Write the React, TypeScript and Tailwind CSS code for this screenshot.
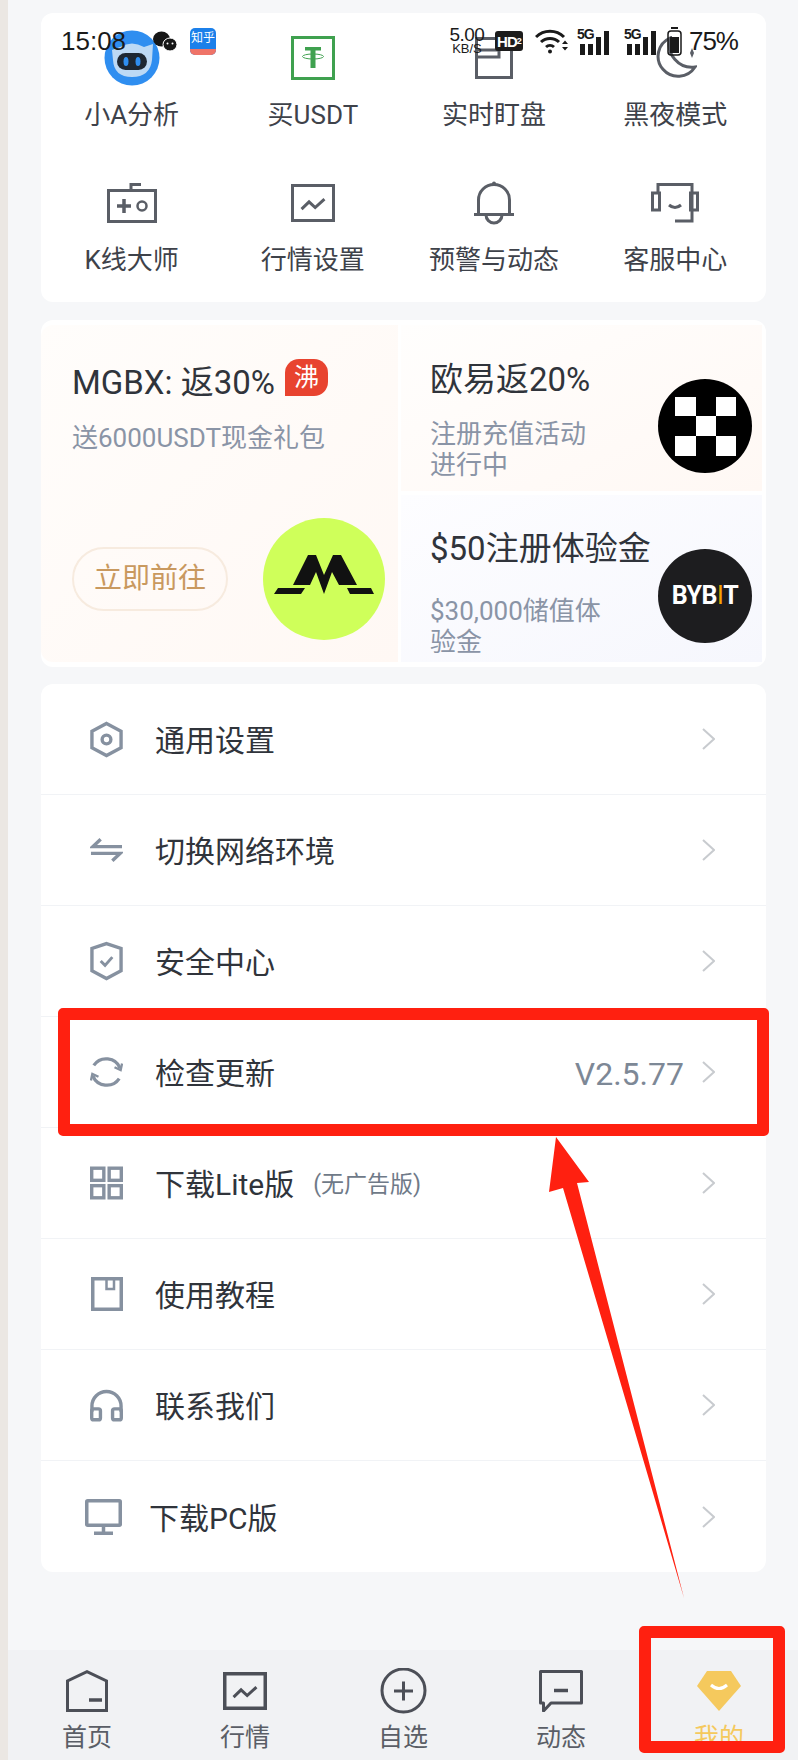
import type { ReactNode } from "react";

const line = "#5a5e66";
const slate = "#8691a0";
const dark = "#4c4f57";

function Chevron() {
  return (
    <svg width="13" height="24" viewBox="0 0 13 24" fill="none" stroke="#c8cbcf" strokeWidth="2">
      <path d="M1 2 L12 12 L1 22" />
    </svg>
  );
}

function Avatar() {
  return (
    <svg width="56" height="56" viewBox="0 0 56 56">
      <circle cx="28" cy="28" r="27.5" fill="#2f8ef0" />
      <path d="M8 20 L16 17 Q28 10 40 17 L49 14 L48 30 Q46 47 28 47 Q10 47 9 30 Z" fill="#bcd9f5" />
      <rect x="13" y="23" width="30" height="17" rx="8.5" fill="#1d2733" />
      <ellipse cx="22" cy="31.5" rx="2.5" ry="4.5" fill="#2f8ef0" />
      <ellipse cx="34" cy="31.5" rx="2.5" ry="4.5" fill="#2f8ef0" />
    </svg>
  );
}

function TetherIcon() {
  return (
    <svg width="44" height="44" viewBox="0 0 44 44" fill="none">
      <rect x="1.5" y="1.5" width="41" height="41" stroke="#3fa14f" strokeWidth="3" />
      <path d="M14 11 H30 V14.500 H24.500 V32 H19.500 V14.500 H14 Z" fill="#3fa14f" />
      <ellipse cx="22" cy="20.500" rx="10.500" ry="2.500" stroke="#3fa14f" strokeWidth="1" />
    </svg>
  );
}

function WatchIcon() {
  return (
    <svg width="38" height="42" viewBox="0 0 38 42" fill="none" stroke={line} strokeWidth="3">
      <rect x="1.5" y="1.5" width="35" height="39" />
      <path d="M1.5 13 H24 V20 H1.5" />
    </svg>
  );
}

function MoonIcon() {
  return (
    <svg width="44" height="44" viewBox="0 0 44 44" fill="none" stroke={line} strokeWidth="3">
      <path d="M17 2 A20 20 0 1 0 42 31 A23 23 0 0 1 17 2 Z" />
      <path d="M39 12 L41 17 L39 22 L37 17 Z" fill={line} strokeWidth="0" />
    </svg>
  );
}

function GameIcon() {
  return (
    <svg width="50" height="40" viewBox="0 0 50 40" fill="none" stroke={line} strokeWidth="3">
      <rect x="1.5" y="7.5" width="47" height="31" />
      <path d="M24 7 V1.5 H34" />
      <path d="M10 23 H24 M17 16 V30" strokeWidth="3.5" />
      <circle cx="35" cy="23" r="4.5" strokeWidth="2.5" />
    </svg>
  );
}

function ChartIcon({ color, w, h, sw }: { color: string; w: number; h: number; sw: number }) {
  return (
    <svg width={w} height={h} viewBox={`0 0 ${w} ${h}`} fill="none" stroke={color} strokeWidth={sw}>
      <rect x={sw / 2} y={sw / 2} width={w - sw} height={h - sw} />
      <path
        d={`M${w * 0.24} ${h * 0.66} L${w * 0.41} ${h * 0.47} L${w * 0.55} ${h * 0.62} L${w * 0.76} ${h * 0.4}`}
        strokeWidth="3"
      />
    </svg>
  );
}

function BellIcon() {
  return (
    <svg width="40" height="44" viewBox="0 0 40 44" fill="none" stroke={line} strokeWidth="3">
      <circle cx="20" cy="2.5" r="2" fill={line} strokeWidth="0" />
      <path d="M4.5 33 V19 A15.5 15.5 0 0 1 35.5 19 V33" />
      <path d="M0 33.5 H40" />
      <path d="M12 34 A8 8 0 0 0 28 34" />
    </svg>
  );
}

function HeadsetIcon() {
  return (
    <svg width="48" height="40" viewBox="0 0 48 40" fill="none" stroke={line} strokeWidth="3">
      <path d="M7 10 V1.5 H41 V38 H24" />
      <rect x="1.5" y="10" width="7" height="17" />
      <rect x="39.5" y="10" width="7" height="17" />
      <path d="M18 22 Q24 27 30 22" />
    </svg>
  );
}

function HexIcon() {
  return (
    <svg width="34" height="37" viewBox="0 0 34 37" fill="none" stroke={slate} strokeWidth="3.5">
      <path d="M17 2 L32 10 V27 L17 35 L2 27 V10 Z" />
      <circle cx="17" cy="18.5" r="4.5" />
    </svg>
  );
}

function SwapIcon() {
  return (
    <svg width="34" height="24" viewBox="0 0 34 24" fill="none" stroke={slate} strokeWidth="3.5">
      <path d="M33 8.5 H3 L11 1" />
      <path d="M1 15.5 H31 L23 23" />
    </svg>
  );
}

function ShieldIcon() {
  return (
    <svg width="34" height="40" viewBox="0 0 34 40" fill="none" stroke={slate} strokeWidth="3.5">
      <path d="M17 2 L32 7 V30 L17 38 L2 30 V7 Z" />
      <path d="M11 20 L15.5 24.5 L23 16" strokeWidth="3" />
    </svg>
  );
}

function RefreshIcon() {
  return (
    <svg width="35" height="36" viewBox="0 0 35 36" fill="none" stroke={slate} strokeWidth="3.5">
      <path d="M4 11 A16 16 0 0 1 32 14" />
      <path d="M31 25 A16 16 0 0 1 3 22" />
      <path d="M26 13 L32.5 16 L34 9" strokeWidth="2.5" />
      <path d="M9 23 L2.5 20 L1 27" strokeWidth="2.5" />
    </svg>
  );
}

function GridIcon() {
  return (
    <svg width="34" height="34" viewBox="0 0 34 34" fill="none" stroke={slate} strokeWidth="3.5">
      <rect x="1.75" y="1.75" width="12.500" height="12.500" />
      <rect x="19.75" y="1.75" width="12.500" height="12.500" />
      <rect x="1.75" y="19.75" width="12.500" height="12.500" />
      <rect x="19.75" y="19.75" width="12.500" height="12.500" />
    </svg>
  );
}

function BookIcon() {
  return (
    <svg width="32" height="34" viewBox="0 0 32 34" fill="none" stroke={slate} strokeWidth="3.5">
      <rect x="1.75" y="1.75" width="28.500" height="30.500" />
      <path d="M15.5 2 V12 H23 V2" strokeWidth="2.5" />
    </svg>
  );
}

function PhonesIcon() {
  return (
    <svg width="34" height="33" viewBox="0 0 34 33" fill="none" stroke={slate} strokeWidth="3.5">
      <path d="M2 23 V17 A15 15 0 0 1 32 17 V23" />
      <rect x="1.75" y="20" width="9" height="11.25" rx="2" />
      <rect x="23.25" y="20" width="9" height="11.25" rx="2" />
    </svg>
  );
}

function MonitorIcon() {
  return (
    <svg width="37" height="36" viewBox="0 0 37 36" fill="none" stroke={slate} strokeWidth="3.5">
      <rect x="1.75" y="1.75" width="33.500" height="24.500" rx="1" />
      <path d="M18.5 27 V34 M9 34.25 H28" />
    </svg>
  );
}

function HomeTab() {
  return (
    <svg width="42" height="42" viewBox="0 0 42 42" fill="none" stroke={dark} strokeWidth="3">
      <path d="M1.5 40.5 V11 L21 1.7 L40.5 11 V40.5 Z" />
      <path d="M23 30 H36" strokeWidth="3.5" />
    </svg>
  );
}

function PlusTab() {
  return (
    <svg width="47" height="46" viewBox="0 0 47 46" fill="none" stroke={dark} strokeWidth="3">
      <circle cx="23.5" cy="22.5" r="21.5" />
      <path d="M14 23 H33 M23.5 13.5 V32.5" />
    </svg>
  );
}

function MessageTab() {
  return (
    <svg width="44" height="42" viewBox="0 0 44 42" fill="none" stroke={dark} strokeWidth="3">
      <path d="M1.5 1.5 H42.5 V33 H12 L4.500 41 V33 H1.500 Z" strokeLinejoin="round" />
      <path d="M15 20.500 H29" strokeWidth="3.500" />
    </svg>
  );
}

function GemTab() {
  return (
    <svg width="44" height="40" viewBox="0 0 44 40">
      <path d="M10 0 H34 L44 15 L22 40 L0 15 Z" fill="#f5c95d" strokeLinejoin="round" />
      <path d="M14 14 Q22 21 30 14" fill="none" stroke="#fff" strokeWidth="3" />
    </svg>
  );
}

function MgbxLogo() {
  return (
    <svg width="122" height="122" viewBox="0 0 122 122">
      <circle cx="61" cy="61" r="61" fill="#cfff5a" />
      <path d="M30 67 L45 37 L53 37 L61 57 L70 37 L78 37 L94 67 L76 67 L69 54 L61 76 L53 54 L47 67 Z" fill="#111" />
      <path d="M11 76 L15 70 L42 70 L38 76 Z M84 70 L108 70 L111 76 L87 76 Z" fill="#111" />
    </svg>
  );
}

function OkxLogo() {
  return (
    <svg className="mb-[18px] shrink-0 self-end" width="94" height="94" viewBox="0 0 94 94">
      <circle cx="47" cy="47" r="47" fill="#000" />
      <rect x="17" y="18" width="21" height="19" fill="#fff" />
      <rect x="58" y="18" width="20" height="19" fill="#fff" />
      <rect x="38" y="37" width="20" height="20" fill="#fff" />
      <rect x="17" y="57" width="21" height="20" fill="#fff" />
      <rect x="58" y="57" width="20" height="20" fill="#fff" />
    </svg>
  );
}

const shortcuts: { label: string; icon: ReactNode }[] = [
  { label: "小A分析", icon: <Avatar /> },
  { label: "买USDT", icon: <TetherIcon /> },
  { label: "实时盯盘", icon: <WatchIcon /> },
  { label: "黑夜模式", icon: <MoonIcon /> },
  { label: "K线大师", icon: <GameIcon /> },
  { label: "行情设置", icon: <ChartIcon color={line} w={44} h={38} sw={3} /> },
  { label: "预警与动态", icon: <BellIcon /> },
  { label: "客服中心", icon: <HeadsetIcon /> },
];

const rows: { label: string; icon: ReactNode; note?: string; value?: string }[] = [
  { label: "通用设置", icon: <HexIcon /> },
  { label: "切换网络环境", icon: <SwapIcon /> },
  { label: "安全中心", icon: <ShieldIcon /> },
  { label: "检查更新", icon: <RefreshIcon />, value: "V2.5.77" },
  { label: "下载Lite版", icon: <GridIcon />, note: "(无广告版)" },
  { label: "使用教程", icon: <BookIcon /> },
  { label: "联系我们", icon: <PhonesIcon /> },
];

const tabs: { label: string; icon: ReactNode; active?: boolean }[] = [
  { label: "首页", icon: <HomeTab /> },
  { label: "行情", icon: <ChartIcon color={dark} w={44} h={38} sw={3.5} /> },
  { label: "自选", icon: <PlusTab /> },
  { label: "动态", icon: <MessageTab /> },
  { label: "我的", icon: <GemTab />, active: true },
];

function Bars() {
  return (
    <div className="relative h-[27px] w-[34px]">
      <span className="absolute left-0 top-0 text-[14px] font-bold leading-[13px] tracking-[-1px] text-[#1a1a1a]">5G</span>
      <div className="absolute bottom-0 left-[3px] flex items-end gap-[3px]">
        <span className="h-[11px] w-[5px] bg-[#1a1a1a]" />
        <span className="h-[11px] w-[5px] bg-[#1a1a1a]" />
        <span className="h-[18px] w-[5px] bg-[#1a1a1a]" />
        <span className="h-[24px] w-[5px] bg-[#1a1a1a]" />
      </div>
    </div>
  );
}

function StatusBar() {
  return (
    <div className="absolute left-[53px] right-[60px] top-[26px] flex h-[30px] items-center justify-between font-['Liberation_Sans','Noto_Sans_CJK_SC',sans-serif] text-[#1a1a1a]">
      <div className="flex items-center">
        <span className="text-[26px] leading-[30px]">15:08</span>
        <svg className="ml-[27px]" width="24" height="21" viewBox="0 0 24 21" fill="#161616">
          <ellipse cx="8.500" cy="8" rx="8.500" ry="7.500" />
          <ellipse cx="17" cy="13.500" rx="7" ry="6.500" stroke="#fff" strokeWidth="1" />
          <circle cx="14.500" cy="12.500" r="1" fill="#fff" />
          <circle cx="19.500" cy="12.500" r="1" fill="#fff" />
        </svg>
        <div className="ml-[13px] flex h-[27px] w-[26px] flex-col overflow-hidden rounded-[5px] bg-[#1c80ea]">
          <span className="flex-1 text-center text-[12px] leading-[20px] text-white">知乎</span>
          <span className="h-[6px] bg-[#ef7468]" />
        </div>
      </div>
      <div className="flex items-center">
        <div className="flex w-[38px] flex-col items-center">
          <span className="text-[19px] leading-[16px] tracking-[-0.5px]">5.00</span>
          <span className="text-[13px] leading-[12px]">KB/S</span>
        </div>
        <div className="ml-[9px] flex h-[20px] w-[28px] items-center justify-center rounded-[3px] bg-[#1c1c1c] text-[15px] font-bold leading-none tracking-[-1px] text-white">
          HD<span className="text-[9px]">2</span>
        </div>
        <svg className="ml-[12px]" width="34" height="25" viewBox="0 0 34 25" fill="none" stroke="#1a1a1a" strokeWidth="3">
          <path d="M1 8 A20 20 0 0 1 29 8" />
          <path d="M6 13 A13 13 0 0 1 24 13" />
          <path d="M11 18 A6 6 0 0 1 19 18" />
          <circle cx="15" cy="22.500" r="2" fill="#1a1a1a" stroke="none" />
          <path d="M27 15 L30 11.500 L33 15 Z M27 18 L30 21.500 L33 18 Z" fill="#1a1a1a" stroke="none" />
        </svg>
        <div className="ml-[8px]">
          <Bars />
        </div>
        <div className="ml-[13px]">
          <Bars />
        </div>
        <svg className="ml-[9px]" width="15" height="29" viewBox="0 0 15 29" fill="none" stroke="#1a1a1a" strokeWidth="1.500">
          <path d="M4 1 H11" strokeWidth="2" />
          <rect x="1" y="4" width="13" height="24" rx="3" />
          <rect x="3" y="10" width="9" height="16" fill="#1a1a1a" stroke="none" />
        </svg>
        <span className="ml-[7px] text-[26px] leading-[30px] tracking-[-1px]">75%</span>
      </div>
    </div>
  );
}

export default function App() {
  return (
    <div className="relative flex h-[1760px] w-[800px] flex-col overflow-hidden border-l-8 border-r-2 border-l-[#ebe7e3] border-r-white bg-[#f6f7f9] font-['Roboto','Noto_Sans_CJK_SC',sans-serif] text-[#30343b]">
      <div className="pl-[33px] pr-[32px]">
        <div className="mt-[13px] grid h-[289px] grid-cols-4 gap-y-[42px] rounded-[12px] bg-white pb-[24px] pt-[17px]">
          {shortcuts.map((item) => (
            <div key={item.label} className="flex flex-col items-center">
              <div className="flex h-[56px] items-center justify-center">{item.icon}</div>
              <span className="mt-[11px] text-[26px] leading-[36px] text-[#3e424a]">{item.label}</span>
            </div>
          ))}
        </div>

        <div className="mt-[18px] flex h-[347px] gap-[3px] rounded-[12px] bg-white py-[5px] pr-[4px]">
          <div className="flex w-[357px] flex-col rounded-l-[12px] bg-gradient-to-br from-[#fffdfb] to-[#fff8f4] pb-[22px] pl-[31px] pr-[13px] pt-[34px]">
            <div className="flex items-center">
              <span className="whitespace-nowrap text-[33px] leading-[40px]">MGBX: 返30%</span>
              <span className="mb-[11px] ml-[10px] flex h-[37px] w-[43px] items-center justify-center rounded-[14px] rounded-bl-none bg-[#e8432f] text-[25px] leading-none text-white">
                沸
              </span>
            </div>
            <p className="mt-[13px] whitespace-nowrap text-[26px] leading-[36px] text-[#8a94a6]">送6000USDT现金礼包</p>
            <div className="mt-auto flex items-center justify-between">
              <span className="flex h-[64px] w-[156px] items-center justify-center rounded-full border-2 border-[#f7ebdf] text-[28px] text-[#c9995f]">
                立即前往
              </span>
              <MgbxLogo />
            </div>
          </div>

          <div className="flex flex-1 flex-col gap-[4px]">
            <div className="flex h-[166px] justify-between bg-gradient-to-br from-[#fffefd] to-[#fff8f4] pl-[29px] pr-[10px] pt-[35px]">
              <div>
                <p className="text-[33px] leading-[40px]">欧易返20%</p>
                <p className="mt-[19px] text-[26px] leading-[31px] text-[#8a94a6]">
                  注册充值活动
                  <br />
                  进行中
                </p>
              </div>
              <OkxLogo />
            </div>
            <div className="flex h-[167px] justify-between bg-gradient-to-br from-[#fdfdff] to-[#f6f7fd] pl-[29px] pr-[10px] pt-[34px]">
              <div>
                <p className="whitespace-nowrap text-[33px] leading-[40px]">$50注册体验金</p>
                <p className="mt-[27px] whitespace-nowrap text-[26px] leading-[31px] text-[#8a94a6]">
                  $30,000储值体
                  <br />
                  验金
                </p>
              </div>
              <div className="mb-[19px] flex h-[94px] w-[94px] shrink-0 items-center justify-center self-end rounded-full bg-[#1d1d1f] text-[25px] font-bold tracking-[-0.5px] text-white">
                BYB<span className="font-normal text-[#f7a600]">I</span>T
              </div>
            </div>
          </div>
        </div>

        <div className="mt-[17px] rounded-[12px] bg-white">
          {rows.map((row) => (
            <div key={row.label} className="flex h-[111px] items-center border-b border-[#f1f3f6] pl-[49px] pr-[51px]">
              <div className="flex w-[33px] justify-center">{row.icon}</div>
              <span className="ml-[32px] pt-[4px] text-[30px] leading-[40px]">{row.label}</span>
              {row.note && <span className="ml-[19px] pt-[4px] text-[23px] text-[#6f7a88]">{row.note}</span>}
              <span className="flex-1" />
              {row.value && <span className="mr-[18px] pt-[4px] text-[32px] leading-[40px] text-[#7d8896]">{row.value}</span>}
              <Chevron />
            </div>
          ))}
          <div className="flex h-[111px] items-center pl-[44px] pr-[51px]">
            <MonitorIcon />
            <span className="ml-[27px] pt-[4px] text-[30px] leading-[40px]">下载PC版</span>
            <span className="flex-1" />
            <Chevron />
          </div>
        </div>
      </div>

      <div className="mt-auto grid h-[110px] grid-cols-5 bg-[#f1f2f4] pt-[17px]">
        {tabs.map((tab) => (
          <div key={tab.label} className="flex flex-col items-center">
            <div className="flex h-[48px] items-center justify-center">{tab.icon}</div>
            <span className={`mt-[6px] text-[25px] leading-[34px] ${tab.active ? "text-[#f5c95d]" : "text-[#5a5e66]"}`}>
              {tab.label}
            </span>
          </div>
        ))}
      </div>

      <StatusBar />

      {/* red annotations drawn over the screenshot */}
      <div className="absolute left-[50px] top-[1008px] h-[128px] w-[711px] rounded-[5px] border-[12px] border-[#ff2010]" />
      <div className="absolute left-[631px] top-[1626px] h-[127px] w-[146px] rounded-[5px] border-[12px] border-[#ff2010]" />
      <svg className="absolute left-[532px] top-[1130px]" width="160" height="470" viewBox="540 1130 160 470">
        <path d="M556 1137 L589 1182 L577 1183 L684 1598 L563 1188 L549 1192 Z" fill="#ff2010" />
      </svg>
    </div>
  );
}
